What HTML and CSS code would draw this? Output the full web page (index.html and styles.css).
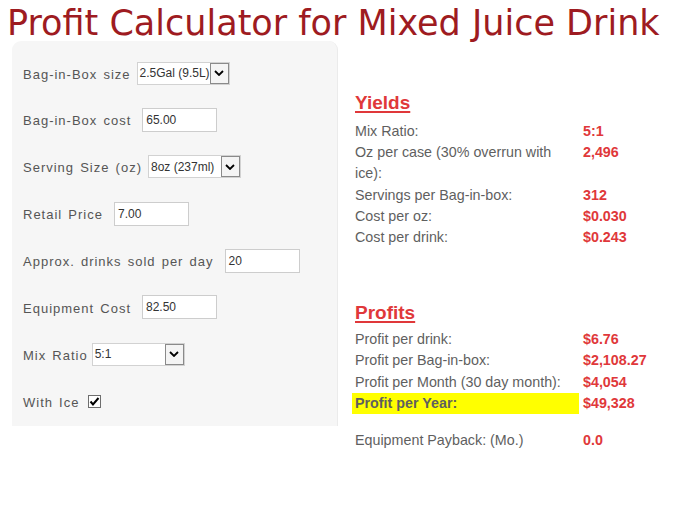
FILE: index.html
```html
<!DOCTYPE html>
<html>
<head>
<meta charset="utf-8">
<link rel="stylesheet" href="styles.css">
</head>
<body>
<h1 class="title">Profit Calculator for Mixed Juice Drink</h1>
<div class="main">
  <div class="panel">
    <div class="row">
      <span class="label">Bag-in-Box size</span>
      <span class="select sel-gap-wide"><span class="sel-text">2.5Gal (9.5L)</span><span class="sel-arrow"><svg width="10" height="6" viewBox="0 0 10 6"><path d="M1 1 L5 5 L9 1" fill="none" stroke="#000" stroke-width="1.8"/></svg></span></span>
    </div>
    <div class="row">
      <span class="label">Bag-in-Box cost</span>
      <span class="field">65.00</span>
    </div>
    <div class="row">
      <span class="label">Serving Size (oz)</span>
      <span class="select"><span class="sel-text">8oz (237ml)</span><span class="sel-arrow"><svg width="10" height="6" viewBox="0 0 10 6"><path d="M1 1 L5 5 L9 1" fill="none" stroke="#000" stroke-width="1.8"/></svg></span></span>
    </div>
    <div class="row">
      <span class="label">Retail Price</span>
      <span class="field">7.00</span>
    </div>
    <div class="row">
      <span class="label">Approx. drinks sold per day</span>
      <span class="field">20</span>
    </div>
    <div class="row">
      <span class="label">Equipment Cost</span>
      <span class="field">82.50</span>
    </div>
    <div class="row">
      <span class="label">Mix Ratio</span>
      <span class="select sel-mix"><span class="sel-text">5:1</span><span class="sel-arrow"><svg width="10" height="6" viewBox="0 0 10 6"><path d="M1 1 L5 5 L9 1" fill="none" stroke="#000" stroke-width="1.8"/></svg></span></span>
    </div>
    <div class="row">
      <span class="label">With Ice</span>
      <span class="checkbox"><svg width="11" height="11" viewBox="0 0 11 11"><path d="M1.5 5.5 L4 8.5 L9.5 2" fill="none" stroke="#000" stroke-width="2"/></svg></span>
    </div>
  </div>
  <div class="results">
    <h2 class="heading">Yields</h2>
    <table class="tbl tbl-first">
      <tr><td class="k">Mix Ratio:</td><td class="v">5:1</td></tr>
      <tr><td class="k">Oz per case (30% overrun with ice):</td><td class="v">2,496</td></tr>
      <tr><td class="k">Servings per Bag-in-box:</td><td class="v">312</td></tr>
      <tr><td class="k">Cost per oz:</td><td class="v">$0.030</td></tr>
      <tr><td class="k">Cost per drink:</td><td class="v">$0.243</td></tr>
    </table>
    <h2 class="heading heading-second">Profits</h2>
    <table class="tbl">
      <tr><td class="k">Profit per drink:</td><td class="v">$6.76</td></tr>
      <tr><td class="k">Profit per Bag-in-box:</td><td class="v">$2,108.27</td></tr>
      <tr><td class="k">Profit per Month (30 day month):</td><td class="v">$4,054</td></tr>
      <tr><td class="k hl">Profit per Year:</td><td class="v">$49,328</td></tr>
      <tr class="spacer"><td></td><td></td></tr>
      <tr><td class="k">Equipment Payback: (Mo.)</td><td class="v">0.0</td></tr>
    </table>
  </div>
</div>
</body>
</html>
```

FILE: styles.css
```css
html, body {
  margin: 0;
  padding: 0;
  background: #fff;
}

body {
  width: 689px;
  height: 512px;
  overflow: hidden;
  font-family: "Liberation Sans", Arial, sans-serif;
}

.title {
  margin: 0;
  padding: 4px 0 0 7px;
  height: 41px;
  box-sizing: border-box;
  font-family: "DejaVu Sans", Verdana, sans-serif;
  font-weight: normal;
  font-size: 35px;
  line-height: 38px;
  color: #9e1b21;
  white-space: nowrap;
}

.main {
  display: flex;
  align-items: flex-start;
}

.panel {
  margin-left: 12px;
  width: 326px;
  height: 385px;
  box-sizing: border-box;
  background: #f6f6f6;
  border-right: 1px solid #ebebeb;
  border-radius: 9px 9px 0 0;
  padding: 20px 0 0 11px;
  display: flex;
  flex-direction: column;
  gap: 22.9px;
}

.row {
  display: flex;
  align-items: center;
  height: 24px;
}

.label {
  font-size: 13px;
  letter-spacing: 1px;
  word-spacing: 1.5px;
  color: #555;
  white-space: nowrap;
  padding-top: 2px;
}

.field {
  margin-left: 11px;
  width: 75px;
  height: 24px;
  box-sizing: border-box;
  border: 1px solid #cdcdcd;
  background: #fff;
  font-size: 12px;
  color: #333;
  padding: 0 3px;
  display: flex;
  align-items: center;
}

.select {
  margin-left: 6px;
  width: 93px;
  height: 23px;
  box-sizing: border-box;
  border: 1px solid #d2d2d2;
  background: #fff;
  display: flex;
  align-items: stretch;
}

.sel-gap-wide {
  margin-left: 6px;
}

.sel-mix {
  margin-left: 4px;
}

.sel-text {
  flex: 1;
  font-size: 12px;
  color: #333;
  padding-left: 2px;
  display: flex;
  align-items: center;
  white-space: nowrap;
  overflow: hidden;
}

.sel-arrow {
  width: 19px;
  box-sizing: border-box;
  border: 1px solid #8a8a8a;
  background: #f4f4f4;
  display: flex;
  align-items: center;
  justify-content: center;
}

.checkbox {
  margin-left: 9px;
  width: 13px;
  height: 13px;
  box-sizing: border-box;
  border: 1px solid #6e6e6e;
  background: #fff;
  display: flex;
  align-items: center;
  justify-content: center;
}

.results {
  margin-left: 14px;
  padding-top: 51px;
  width: 320px;
}

.heading {
  margin: 0 0 0 3px;
  font-size: 19px;
  line-height: 22px;
  font-weight: bold;
  color: #e0383a;
  text-decoration: underline;
  text-decoration-thickness: 2px;
  text-underline-offset: 2px;
}

.heading-second {
  margin-top: 54px;
}

.tbl {
  border-collapse: collapse;
  border-spacing: 0;
  margin-top: 5px;
}

.tbl-first {
  margin-top: 7px;
}

.tbl td {
  padding: 0;
  font-size: 14.3px;
  line-height: 21.2px;
  vertical-align: top;
}

.k {
  width: 215px;
  padding: 0 9px 0 3px !important;
  color: #5f5f5f;
}

.v {
  padding-left: 4px !important;
  color: #e0383a;
  font-weight: bold;
  white-space: nowrap;
}

.hl {
  background: #ffff00;
  font-weight: bold;
}

.spacer td {
  height: 15.5px;
  line-height: 15.5px;
}
```
